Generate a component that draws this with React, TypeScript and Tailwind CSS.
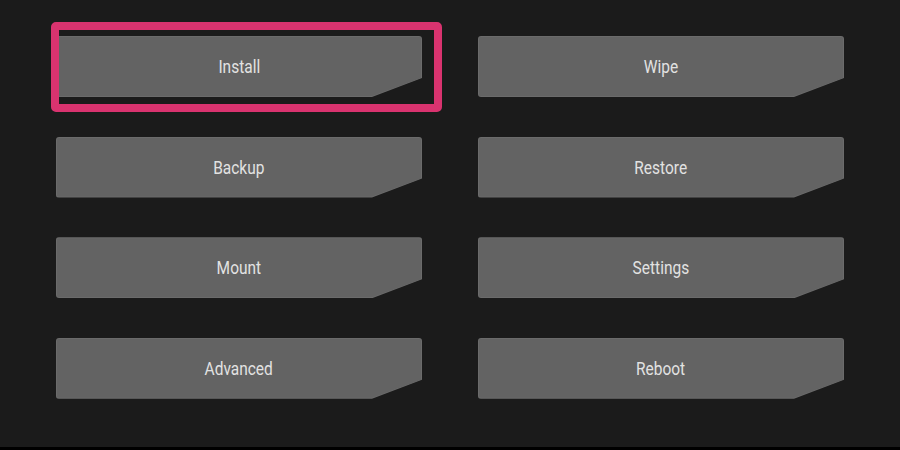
const items = ["Install", "Wipe", "Backup", "Restore", "Mount", "Settings", "Advanced", "Reboot"];

function MenuButton({ label, selected }: { label: string; selected?: boolean }) {
  return (
    <div className="relative h-[61px]">
      <div className="h-full rounded-[3px] bg-[#6b6b6b] p-px [clip-path:polygon(0_0,100%_0,100%_calc(100%_-_19px),calc(100%_-_50px)_100%,0_100%)]">
        <div className="flex h-full items-center justify-center rounded-[2px] bg-[#636363] [clip-path:polygon(0_0,100%_0,100%_calc(100%_-_18px),calc(100%_-_49px)_100%,0_100%)]">
          <span className="inline-block scale-x-[0.86] font-['Roboto',sans-serif] text-[18px] text-[#e2e2e2]">
            {label}
          </span>
        </div>
      </div>
      {selected && (
        <div className="pointer-events-none absolute left-[-5px] top-[-14px] h-[90px] w-[391px] rounded-[5px] border-[8px] border-[#d9336f]" />
      )}
    </div>
  );
}

export default function App() {
  return (
    <div className="flex h-[450px] w-[900px] flex-col bg-black">
      <div className="h-[447px] bg-[#1b1b1b] px-[56px] pt-[36px]">
        <div className="grid grid-cols-2 gap-x-[56px] gap-y-[39.6px]">
          {items.map((label, i) => (
            <MenuButton key={label} label={label} selected={i === 0} />
          ))}
        </div>
      </div>
    </div>
  );
}
